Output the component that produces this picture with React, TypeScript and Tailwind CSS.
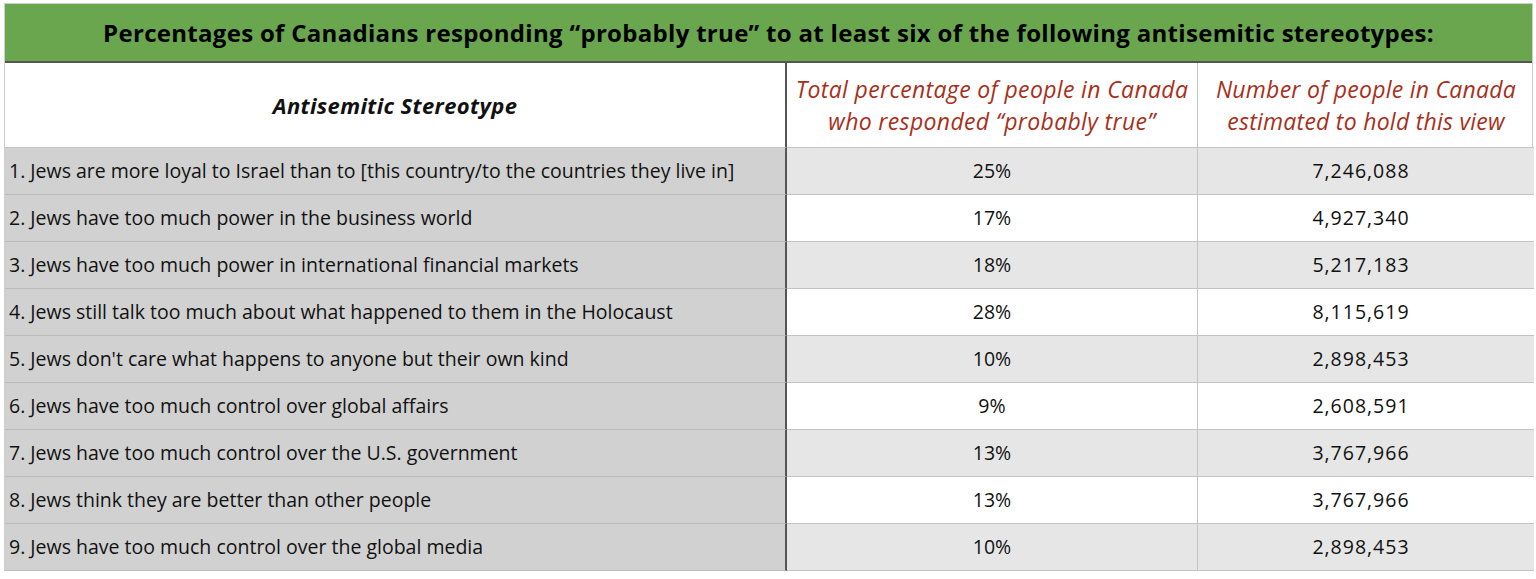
const rows = [
  ["1. Jews are more loyal to Israel than to [this country/to the countries they live in]", "25%", "7,246,088"],
  ["2. Jews have too much power in the business world", "17%", "4,927,340"],
  ["3. Jews have too much power in international financial markets", "18%", "5,217,183"],
  ["4. Jews still talk too much about what happened to them in the Holocaust", "28%", "8,115,619"],
  ["5. Jews don't care what happens to anyone but their own kind", "10%", "2,898,453"],
  ["6. Jews have too much control over global affairs", "9%", "2,608,591"],
  ["7. Jews have too much control over the U.S. government", "13%", "3,767,966"],
  ["8. Jews think they are better than other people", "13%", "3,767,966"],
  ["9. Jews have too much control over the global media", "10%", "2,898,453"],
];

export default function App() {
  return (
    <div className="min-h-[579px] bg-white pl-[4px] pt-[3px] font-['Open_Sans',sans-serif] text-[#111]">
      <div className="w-[1529px] border-t border-r border-l border-[#cfcfcf]">
        <div className="flex h-[59px] items-center justify-center border-b-2 border-[#555] bg-[#69a64e]">
          <h1 className="text-[24px] font-bold tracking-[0.3px] text-black">
            Percentages of Canadians responding “probably true” to at least six of the following antisemitic stereotypes:
          </h1>
        </div>
        <div className="grid grid-cols-[782px_411px_336px]">
          <div className="flex h-[85px] items-center justify-center border-r-2 border-b border-r-[#555] border-b-[#c4c4c4] bg-white">
            <span className="text-[22px] font-bold italic tracking-[0.35px]">Antisemitic Stereotype</span>
          </div>
          <div className="flex h-[85px] flex-col items-center justify-center border-r border-b border-[#c4c4c4] text-[23px] italic leading-[32px] tracking-[0.35px] text-[#a8301b]">
            <span>Total percentage of people in Canada</span>
            <span>who responded “probably true”</span>
          </div>
          <div className="flex h-[85px] flex-col items-center justify-center border-b border-[#c4c4c4] text-[23px] italic leading-[32px] tracking-[0.25px] text-[#a8301b]">
            <span>Number of people in Canada</span>
            <span>estimated to hold this view</span>
          </div>
          {rows.map(([label, pct, num], i) => {
            const shade = i % 2 === 0 ? "bg-[#e6e6e6]" : "bg-white";
            return (
              <div key={label} className="contents">
                <div className="flex h-[47px] items-center border-r-2 border-b border-r-[#555] border-b-[#bcbcbc] bg-[#d1d1d1] pl-[4px] text-[19.5px]">
                  {label}
                </div>
                <div className={`flex h-[47px] items-center justify-center border-r border-b border-[#c4c4c4] text-[19.5px] ${shade}`}>
                  {pct}
                </div>
                <div className={`flex h-[47px] items-center justify-center border-b border-[#c4c4c4] pr-[10px] text-[19.5px] tracking-[1px] ${shade}`}>
                  {num}
                </div>
              </div>
            );
          })}
        </div>
      </div>
    </div>
  );
}
